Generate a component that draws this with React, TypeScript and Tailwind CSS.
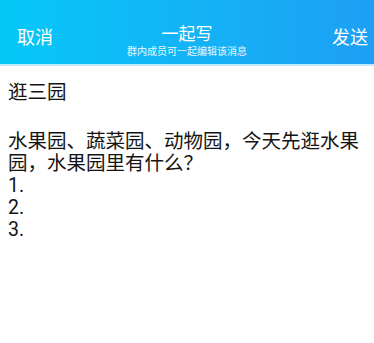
import React from 'react';

const font = { fontFamily: 'Roboto, "Noto Sans CJK SC", sans-serif' };

export default function App() {
  return (
    <div className="h-[343px] w-[374px] overflow-hidden bg-white" style={font}>
      <div className="flex h-[64px] items-end bg-gradient-to-r from-[#05c8f7] to-[#1d9ff4] pb-[5px] text-white">
        <div className="w-[80px] pb-[9px] pl-[17px] text-[18px] leading-[24px]">取消</div>
        <div className="flex flex-1 flex-col items-center">
          <div className="text-[17px] leading-[22px]">一起写</div>
          <div className="text-[10px] leading-[14px] text-white/90">群内成员可一起编辑该消息</div>
        </div>
        <div className="w-[80px] pb-[9px] pr-[6px] text-right text-[18px] leading-[24px]">发送</div>
      </div>
      <div className="h-[2px] bg-[#bfe9fb]" />
      <div className="px-2 pt-[16px] text-[19.5px] leading-[22px] text-[#141414]">
        <div>逛三园</div>
        <div className="h-[27px]" />
        <div>水果园、蔬菜园、动物园，今天先逛水果园，水果园里有什么？</div>
        <div>1.</div>
        <div>2.</div>
        <div>3.</div>
      </div>
    </div>
  );
}
